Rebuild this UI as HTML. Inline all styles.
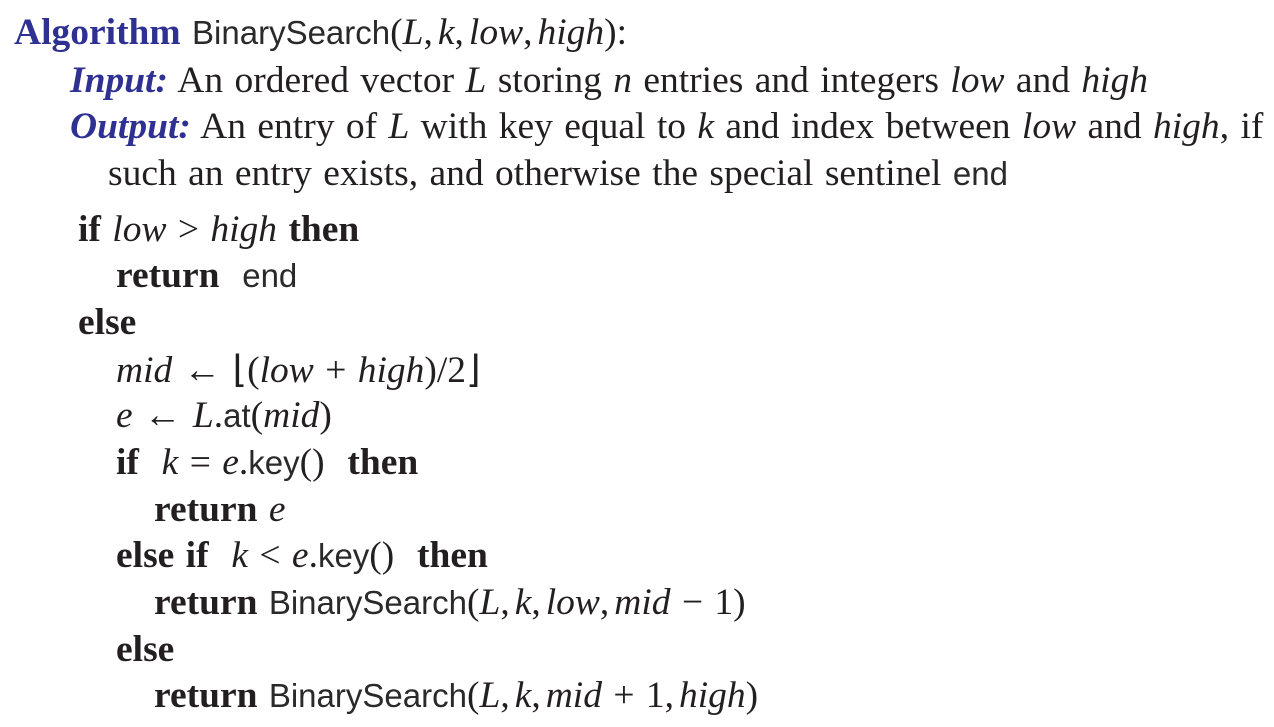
<!DOCTYPE html>
<html><head><meta charset="utf-8"><style>
body{margin:0;width:1274px;height:727px;background:#fff;overflow:hidden;position:relative;font-family:"Liberation Serif",serif;font-size:37.5px;color:#231f20}
.l{position:absolute;line-height:34px;white-space:nowrap;word-spacing:2px}
.b{font-weight:bold}
.bl{color:#2e3192;font-weight:bold}
.i{font-style:italic}
.s{font-family:"Liberation Sans",sans-serif;font-size:33px;font-weight:300;color:#2a2a2a;word-spacing:0}
.c{margin-right:5px}
</style></head><body>
<div class="l" style="left:14px;top:16px"><span class="bl">Algorithm</span> <span class="s">BinarySearch</span>(<span class="i">L</span>,<span class="c"></span><span class="i">k</span>,<span class="c"></span><span class="i">low</span>,<span class="c"></span><span class="i">high</span>):</div>
<div class="l" style="left:70px;top:64px"><span class="bl i">Input:</span> An ordered vector <span class="i">L</span> storing <span class="i">n</span> entries and integers <span class="i">low</span> and <span class="i">high</span></div>
<div class="l" style="left:70px;top:110px"><span class="bl i">Output:</span> An entry of <span class="i">L</span> with key equal to <span class="i">k</span> and index between <span class="i">low</span> and <span class="i">high</span>, if</div>
<div class="l" style="left:108px;top:157px">such an entry exists, and otherwise the special sentinel <span class="s">end</span></div>
<div class="l" style="left:78px;top:213px"><span class="b">if</span> <span class="i">low</span> &gt; <span class="i">high</span> <span class="b">then</span></div>
<div class="l" style="left:116px;top:259px"><span class="b">return</span>&nbsp; <span class="s">end</span></div>
<div class="l" style="left:78px;top:306px"><span class="b">else</span></div>
<div class="l" style="left:116px;top:354px"><span class="i">mid</span> ← ⌊(<span class="i">low</span> + <span class="i">high</span>)/2⌋</div>
<div class="l" style="left:116px;top:399px"><span class="i">e</span> ← <span class="i">L</span>.<span class="s">at</span>(<span class="i">mid</span>)</div>
<div class="l" style="left:116px;top:446px"><span class="b">if</span>&nbsp; <span class="i">k</span> = <span class="i">e</span>.<span class="s">key</span>()&nbsp; <span class="b">then</span></div>
<div class="l" style="left:154px;top:493px"><span class="b">return</span> <span class="i">e</span></div>
<div class="l" style="left:116px;top:539px"><span class="b">else if</span>&nbsp; <span class="i">k</span> &lt; <span class="i">e</span>.<span class="s">key</span>()&nbsp; <span class="b">then</span></div>
<div class="l" style="left:154px;top:586px"><span class="b">return</span> <span class="s">BinarySearch</span>(<span class="i">L</span>,<span class="c"></span><span class="i">k</span>,<span class="c"></span><span class="i">low</span>,<span class="c"></span><span class="i">mid</span> − 1)</div>
<div class="l" style="left:116px;top:633px"><span class="b">else</span></div>
<div class="l" style="left:154px;top:679px"><span class="b">return</span> <span class="s">BinarySearch</span>(<span class="i">L</span>,<span class="c"></span><span class="i">k</span>,<span class="c"></span><span class="i">mid</span> + 1,<span class="c"></span><span class="i">high</span>)</div>
</body></html>
